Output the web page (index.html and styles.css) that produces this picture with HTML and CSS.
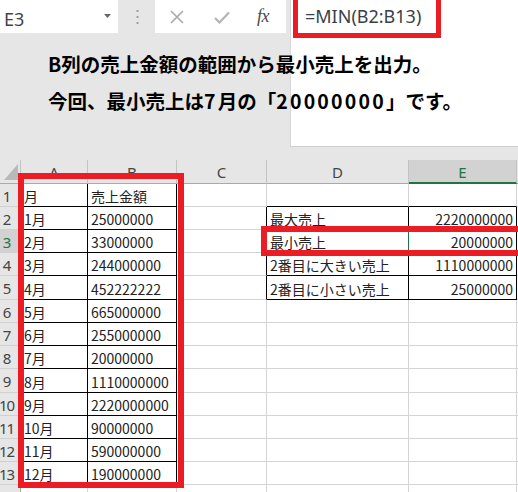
FILE: index.html
```html
<!DOCTYPE html>
<html lang="ja">
<head>
<meta charset="utf-8">
<link rel="stylesheet" href="styles.css">
</head>
<body>
<div class="app">
  <div class="top">
    <div class="toolbar">
      <div class="namebox">
        <span class="cellref">E3</span>
        <svg class="drop" width="7" height="4" viewBox="0 0 7 4"><polygon points="0,0 7,0 3.5,4" fill="#666"/></svg>
      </div>
      <div class="dots">
        <svg width="3" height="14" viewBox="0 0 3 14"><rect x="0.5" y="0" width="2" height="2" fill="#a0a0a0"/><rect x="0.5" y="6" width="2" height="2" fill="#a0a0a0"/><rect x="0.5" y="12" width="2" height="2" fill="#a0a0a0"/></svg>
      </div>
      <div class="fnbox">
        <svg class="ic ic-x" width="14" height="14" viewBox="0 0 14 14"><path d="M1 1 L13 13 M13 1 L1 13" stroke="#a8a8a8" stroke-width="1.6" fill="none"/></svg>
        <svg class="ic ic-ok" width="16" height="13" viewBox="0 0 16 13"><path d="M1 7 L5.5 11.5 L15 1.5" stroke="#b4b4b4" stroke-width="2.2" fill="none"/></svg>
        <span class="fx">fx</span>
      </div>
    </div>
    <div class="formula"><span class="ftext">=MIN(B2:B13)</span></div>
  </div>

  <div class="sheet">
    <div class="h corner"><svg width="14" height="16" viewBox="0 0 14 16"><polygon points="14,0 14,16 0,16" fill="#b9b9b9"/></svg></div>
    <div class="h">A</div>
    <div class="h">B</div>
    <div class="h">C</div>
    <div class="h">D</div>
    <div class="h sel">E</div>
    <div class="h"></div>

    <div class="rh">1</div>
    <div class="c kr kb">月</div>
    <div class="c kr kb">売上金額</div>
    <div class="c"></div>
    <div class="c kb"></div>
    <div class="c kb"></div>
    <div class="c"></div>

    <div class="rh">2</div>
    <div class="c kr kb">1月</div>
    <div class="c kr kb">25000000</div>
    <div class="c kr"></div>
    <div class="c kr kb">最大売上</div>
    <div class="c kr kb num">2220000000</div>
    <div class="c"></div>

    <div class="rh rsel">3</div>
    <div class="c kr kb">2月</div>
    <div class="c kr kb">33000000</div>
    <div class="c kr"></div>
    <div class="c kr kb act">最小売上</div>
    <div class="c kr kb num">20000000</div>
    <div class="c"></div>

    <div class="rh">4</div>
    <div class="c kr kb">3月</div>
    <div class="c kr kb">244000000</div>
    <div class="c kr"></div>
    <div class="c kr kb">2番目に大きい売上</div>
    <div class="c kr kb num">1110000000</div>
    <div class="c"></div>

    <div class="rh">5</div>
    <div class="c kr kb">4月</div>
    <div class="c kr kb">452222222</div>
    <div class="c kr"></div>
    <div class="c kr kb">2番目に小さい売上</div>
    <div class="c kr kb num">25000000</div>
    <div class="c"></div>

    <div class="rh">6</div>
    <div class="c kr kb">5月</div>
    <div class="c kr kb">665000000</div>
    <div class="c"></div><div class="c"></div><div class="c"></div><div class="c"></div>

    <div class="rh">7</div>
    <div class="c kr kb">6月</div>
    <div class="c kr kb">255000000</div>
    <div class="c"></div><div class="c"></div><div class="c"></div><div class="c"></div>

    <div class="rh">8</div>
    <div class="c kr kb">7月</div>
    <div class="c kr kb">20000000</div>
    <div class="c"></div><div class="c"></div><div class="c"></div><div class="c"></div>

    <div class="rh">9</div>
    <div class="c kr kb">8月</div>
    <div class="c kr kb">1110000000</div>
    <div class="c"></div><div class="c"></div><div class="c"></div><div class="c"></div>

    <div class="rh">10</div>
    <div class="c kr kb">9月</div>
    <div class="c kr kb">2220000000</div>
    <div class="c"></div><div class="c"></div><div class="c"></div><div class="c"></div>

    <div class="rh">11</div>
    <div class="c kr kb">10月</div>
    <div class="c kr kb">90000000</div>
    <div class="c"></div><div class="c"></div><div class="c"></div><div class="c"></div>

    <div class="rh">12</div>
    <div class="c kr kb">11月</div>
    <div class="c kr kb">590000000</div>
    <div class="c"></div><div class="c"></div><div class="c"></div><div class="c"></div>

    <div class="rh">13</div>
    <div class="c kr kb">12月</div>
    <div class="c kr kb">190000000</div>
    <div class="c"></div><div class="c"></div><div class="c"></div><div class="c"></div>

    <div class="rh"></div>
    <div class="c"></div><div class="c"></div><div class="c"></div><div class="c"></div><div class="c"></div><div class="c"></div>
  </div>

  <div class="note">
    <p>B列の売上金額の範囲から最小売上を出力。</p>
    <p>今回、最小売上は<span class="wide">7</span>月の「<span class="wide">20000000</span>」です。</p>
  </div>

  <div class="mark mark-f"></div>
  <div class="mark mark-a"></div>
  <div class="mark mark-d"></div>
</div>
</body>
</html>
```

FILE: styles.css
```css
* { box-sizing: border-box; }
html, body { margin: 0; padding: 0; }
body {
  width: 518px;
  height: 492px;
  overflow: hidden;
  background: #e6e6e6;
  font-family: "Noto Sans CJK JP", "Noto Sans", sans-serif;
}
.app {
  position: relative;
  width: 518px;
  height: 492px;
  overflow: hidden;
  background: #e6e6e6;
}

/* ---------- top / formula bar ---------- */
.top {
  display: flex;
  height: 160px;
}
.toolbar {
  display: flex;
  width: 290px;
  height: 33px;
  flex: none;
}
.namebox {
  width: 118px;
  height: 33px;
  background: #fff;
  display: flex;
  align-items: center;
  padding-left: 4px;
  position: relative;
}
.cellref {
  font-family: "Noto Sans", sans-serif;
  font-size: 18px;
  color: #444;
  line-height: 1;
  margin-top: 4px;
}
.drop {
  margin-left: auto;
  margin-right: 7px;
  margin-top: -2px;
}
.dots {
  width: 37px;
  display: flex;
  justify-content: center;
  align-items: center;
  padding-left: 1px;
}
.fnbox {
  width: 131px;
  height: 33px;
  background: #fff;
  display: flex;
  align-items: center;
  padding-left: 15px;
}
.ic-x { margin-top: 1px; }
.ic-ok { margin-left: 30px; margin-top: 1px; }
.fx {
  margin-left: 27px;
  font-family: "Liberation Serif", "DejaVu Serif", serif;
  font-style: italic;
  font-size: 18px;
  color: #4a4a4a;
  letter-spacing: -0.5px;
}
.formula {
  flex: 1;
  height: 147px;
  background: #fff;
  border-left: 1px solid #d8d8d8;
  border-bottom: 1px solid #cfcfcf;
  padding-left: 14px;
  padding-top: 3px;
}
.ftext {
  font-family: "Noto Sans", sans-serif;
  font-size: 18px;
  line-height: 26px;
  color: #3a3f48;
}

/* ---------- sheet grid ---------- */
.sheet {
  display: grid;
  grid-template-columns: 21px 67px 89px 90px 142px 108px 40px;
  grid-template-rows: 24px 23px 23px 23px 23px 24px 23px 23px 23px 24px 23px 23px 23px 23px 23px;
  width: 580px;
}
.h {
  background: #e6e6e6;
  border-right: 1px solid #c4c4c4;
  border-bottom: 1px solid #a9a9a9;
  display: flex;
  align-items: center;
  justify-content: center;
  font-family: "Noto Sans", sans-serif;
  font-size: 15px;
  color: #444;
  padding-top: 1px;
}
.h.corner {
  justify-content: flex-start;
  align-items: flex-end;
  padding: 0 0 3px 4px;
}
.h.sel {
  background: #d2d2d2;
  color: #217346;
  border-bottom: 2px solid #217346;
}
.rh {
  background: #e6e6e6;
  border-right: 1px solid #a9a9a9;
  border-bottom: 1px solid #d0d0d0;
  display: flex;
  align-items: center;
  justify-content: center;
  padding-right: 7px;
  padding-top: 1px;
  font-family: "Noto Sans", sans-serif;
  font-size: 15px;
  letter-spacing: -1px;
  color: #444;
}
.rh.rsel {
  background: #d2d2d2;
  color: #217346;
}
.c {
  background: #fff;
  border-right: 1px solid #d4d4d4;
  border-bottom: 1px solid #d4d4d4;
  display: flex;
  align-items: center;
  padding: 2px 3px 0 3px;
  font-size: 14px;
  color: #222;
  white-space: nowrap;
  overflow: hidden;
}
.c.num { justify-content: flex-end; }
.c.kr { border-right-color: #000; }
.c.kb { border-bottom-color: #000; }
.c.act { border-right-color: #217346; }

/* ---------- annotation overlay ---------- */
.note {
  position: absolute;
  left: 48px;
  top: 45px;
  font-family: "Noto Sans CJK JP", sans-serif;
  font-weight: 700;
  font-size: 19.5px;
  line-height: 37px;
  color: #000;
}
.note p { margin: 0; white-space: nowrap; }
.note .wide { letter-spacing: 2.2px; }

/* ---------- red highlight boxes ---------- */
.mark {
  position: absolute;
  border: 6px solid #ec1c24;
}
.mark-f {
  left: 293px;
  top: -8px;
  width: 148px;
  height: 46px;
  border-width: 5px;
}
.mark-a {
  left: 18px;
  top: 173px;
  width: 166px;
  height: 315px;
}
.mark-d {
  left: 261px;
  top: 226px;
  width: 280px;
  height: 30px;
}
```
